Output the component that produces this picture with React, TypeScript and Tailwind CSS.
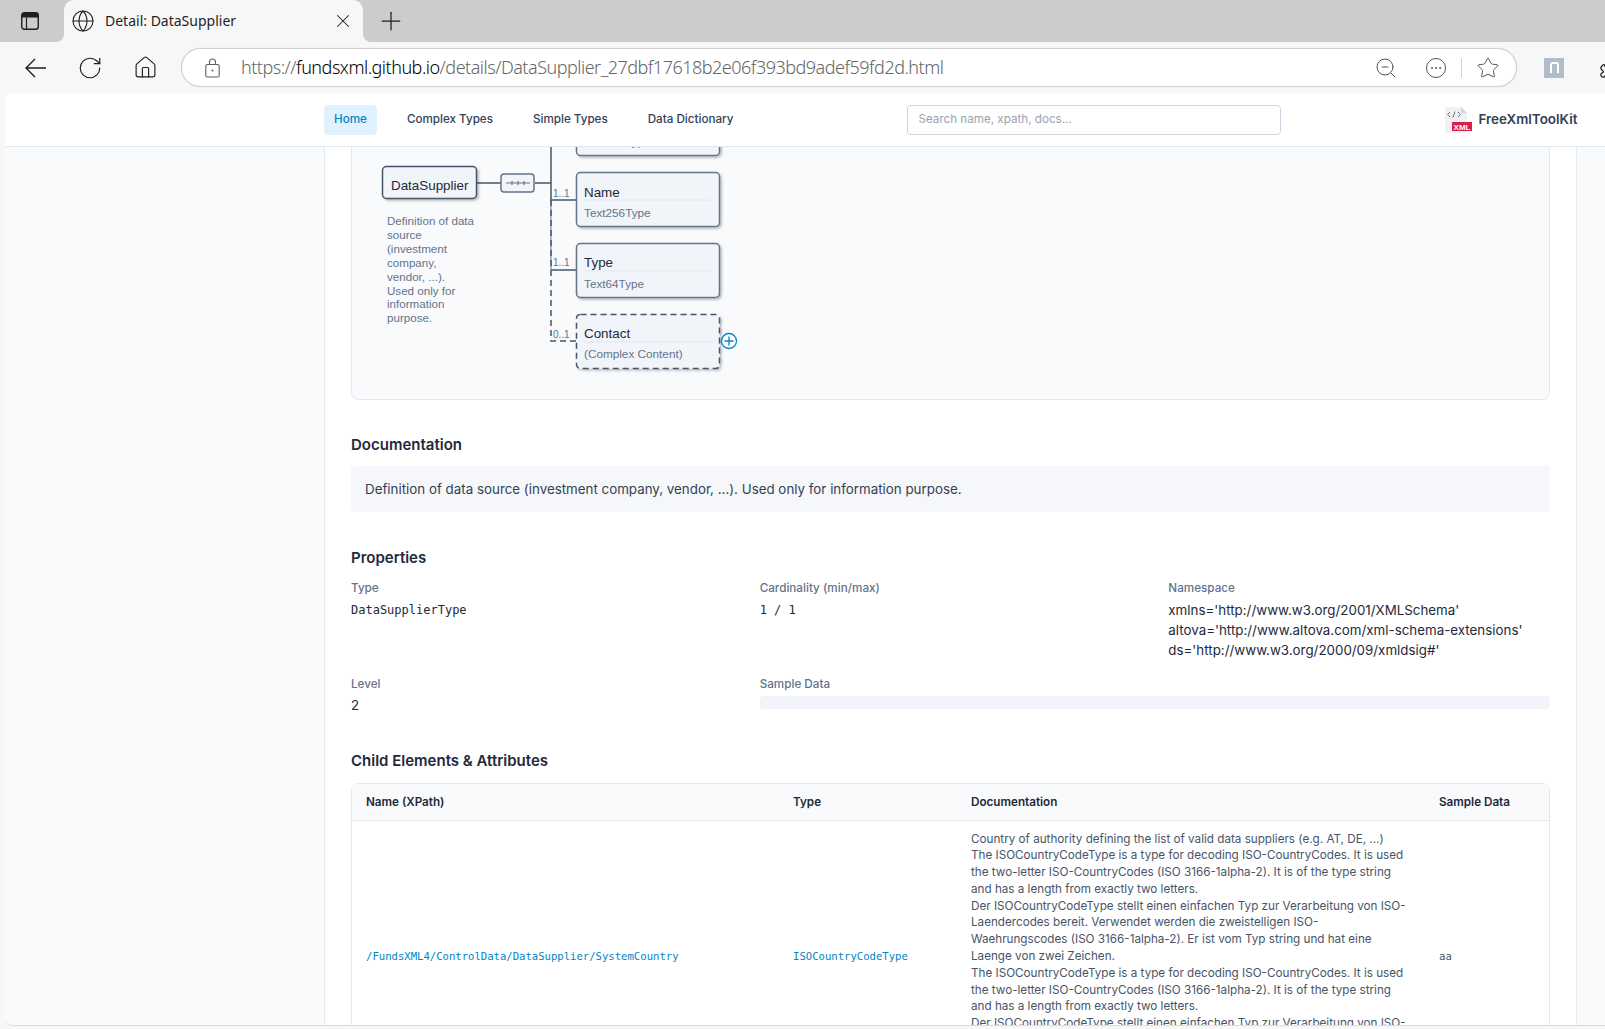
import { Globe, House, Plus, RotateCw, Star, X, ZoomOut, Puzzle, Ellipsis } from 'lucide-react';

const navItems = ['Complex Types', 'Simple Types', 'Data Dictionary'];

const namespaces = [
    "xmlns='http://www.w3.org/2001/XMLSchema'",
    "altova='http://www.altova.com/xml-schema-extensions'",
    "ds='http://www.w3.org/2000/09/xmldsig#'",
];

const docEn = (
    <>
        The ISOCountryCodeType is a type for decoding ISO-CountryCodes. It is used the two-letter
        ISO-CountryCodes (ISO 3166-1alpha-2). It is of the type string and has a length from exactly
        two letters.
    </>
);

const docDe = (
    <>
        Der ISOCountryCodeType stellt einen einfachen Typ zur Verarbeitung von ISO-Laendercodes
        bereit. Verwendet werden die zweistelligen ISO-Waehrungscodes (ISO 3166-1alpha-2). Er ist vom
        Typ string und hat eine Laenge von zwei Zeichen.
    </>
);

// y is the top of the box on the page, the first one sits mostly under the nav bar
const diagramBoxes = [
    { y: 101, name: '', nameY: 0, sub: 'Text256Type', subY: 146, dashed: false },
    { y: 172, name: 'Name', nameY: 197, sub: 'Text256Type', subY: 217, dashed: false },
    { y: 243, name: 'Type', nameY: 267, sub: 'Text64Type', subY: 288, dashed: false },
    { y: 314, name: 'Contact', nameY: 338, sub: '(Complex Content)', subY: 358, dashed: true },
];

const descLines = [
    'Definition of data',
    'source',
    '(investment',
    'company,',
    'vendor, ...).',
    'Used only for',
    'information',
    'purpose.',
];

function TabStrip() {
    return (
        <div className="flex h-[42px] shrink-0 bg-[#f7f7f7]">
            <div className="flex w-[64px] items-center rounded-br-[8px] bg-[#cccccc] pl-[21px]">
                <svg width="18" height="18" viewBox="0 0 18 18" fill="none">
                    <rect x="0.75" y="0.75" width="16.5" height="16.5" rx="2.5" stroke="#1f1f1f" strokeWidth="1.4" />
                    <path d="M1 3a2 2 0 0 1 2-2h12a2 2 0 0 1 2 2v2.5H1z" fill="#1f1f1f" />
                    <path d="M5.5 5.5v11.5" stroke="#1f1f1f" strokeWidth="1.2" />
                </svg>
            </div>
            <div className="w-[299px] bg-[#cccccc]">
                <div className="flex h-full items-center rounded-t-[10px] bg-[#f7f7f7] pl-[7px] text-[#1f1f1f]">
                    <Globe size={24} strokeWidth={1.1} className="shrink-0" />
                    <span className="ml-[10px] w-[227px] pb-[2px] font-['Noto_Sans'] text-[14px]">Detail: DataSupplier</span>
                    <X size={22} strokeWidth={1.1} className="shrink-0" />
                </div>
            </div>
            <div className="flex flex-1 items-center rounded-bl-[8px] bg-[#cccccc] pl-[13px] text-[#1f1f1f]">
                <Plus size={30} strokeWidth={1} />
            </div>
        </div>
    );
}

function Toolbar() {
    return (
        <div className="flex h-[51px] shrink-0 items-center overflow-hidden bg-[#f7f7f7] pl-[25px] text-[#1f1f1f]">
            <svg width="21" height="20" viewBox="0 0 21 20" fill="none" stroke="#1f1f1f" strokeWidth="1.4" className="shrink-0">
                <path d="M21 10H1M10 1l-9 9 9 9" />
            </svg>
            <RotateCw size={26} strokeWidth={1.1} className="ml-[31px] shrink-0" />
            <House size={25} strokeWidth={1.1} className="ml-[30px] shrink-0" />
            <div className="ml-[23px] flex h-[39px] w-[1336px] shrink-0 items-center rounded-full border border-[#d0d0d0] bg-white pl-[23px] shadow-[0_0_1px_#c8c8c8]">
                <svg width="15" height="20" viewBox="0 0 15 20" fill="none" stroke="#5f5f5f" strokeWidth="1.1" className="shrink-0">
                    <rect x="0.8" y="6.5" width="13.4" height="12.5" rx="1.5" />
                    <path d="M4.5 6.5V4a3 3 0 0 1 6 0v2.5" />
                    <circle cx="7.5" cy="12.5" r="1" fill="#5f5f5f" stroke="none" />
                </svg>
                <div className="ml-[21px] w-[1133px] shrink-0 truncate font-['Noto_Sans'] text-[18px] font-light tracking-[-0.5px] text-[#666666]">
                    https://<span className="text-black">fundsxml.github.io</span>/details/DataSupplier_27dbf17618b2e06f393bd9adef59fd2d.html
                </div>
                <ZoomOut size={24} strokeWidth={1} className="shrink-0 text-[#555555]" />
                <div className="ml-[28px] flex h-[20px] w-[20px] shrink-0 items-center justify-center rounded-full border border-[#555555] text-[#555555]">
                    <Ellipsis size={14} strokeWidth={1.6} />
                </div>
                <div className="ml-[15px] h-[20px] w-px shrink-0 bg-[#d4d4d4]" />
                <Star size={24} strokeWidth={1} className="ml-[14px] shrink-0 text-[#555555]" />
            </div>
            <div className="ml-[27px] flex h-[20px] w-[20px] shrink-0 items-center justify-center bg-[#b2bccb]">
                <div className="h-[11px] w-[9px] rounded-t-[3px] border-x-2 border-t-2 border-white" />
            </div>
            <Puzzle size={22} strokeWidth={1.4} className="ml-[35px] shrink-0" />
        </div>
    );
}

function NavBar() {
    return (
        <div className="flex h-[54px] shrink-0 items-center border-b border-[#e2e8f0] bg-white pl-[319px] font-['Inter'] text-[11.65px] font-medium text-[#334155]">
            <div className="flex h-[30px] items-center rounded-[4px] bg-[#e0f2fe] px-[10px] text-[#0284c7]">Home</div>
            {navItems.map((item) => (
                <div key={item} className="ml-[20px] px-[10px]">
                    {item}
                </div>
            ))}
            <div className="ml-[164px] flex h-[30px] w-[374px] items-center rounded-[4px] border border-[#cbd5e1] px-[10px] font-normal text-[#9ca3af]">
                Search name, xpath, docs...
            </div>
            <svg width="27" height="26" viewBox="0 0 27 26" className="ml-[164px] shrink-0">
                <path d="M0 0h16l6 6v20H0z" fill="#f1f1f1" />
                <path d="M16 0l6 6h-6z" fill="#d4d4d4" />
                <path d="M5 5L2.5 7.5 5 10M10 4.5l-2 6M13 5l2.5 2.5L13 10" stroke="#64748b" strokeWidth="1" fill="none" />
                <rect x="7" y="15" width="20" height="9" fill="#d81e4a" />
                <text x="17" y="22.5" textAnchor="middle" fontFamily="Liberation Sans" fontSize="8" fontWeight="700" fill="#ffffff">XML</text>
            </svg>
            <span className="ml-[6px] text-[13.45px] font-semibold text-[#334155]">FreeXmlToolKit</span>
        </div>
    );
}

function SchemaDiagram() {
    // viewBox follows the page coordinates, so what is above y=147 is behind the nav bar
    return (
        <svg width="500" height="252" viewBox="352 147 500 252" fontFamily="Liberation Sans" className="block">
            <defs>
                <filter id="boxShadow" x="-10%" y="-10%" width="125%" height="125%">
                    <feDropShadow dx="1.5" dy="1.5" stdDeviation="1.2" floodColor="#000000" floodOpacity="0.28" />
                </filter>
            </defs>

            <path d="M551 200V270" stroke="#94a3b8" strokeWidth="1.5" />
            <path d="M551 146V200M551 200H576M551 270H576M477 183H501M535 183H551" stroke="#475569" strokeWidth="1.5" fill="none" />
            <path d="M551 200V341H576" stroke="#475569" strokeWidth="1.5" strokeDasharray="6 4" fill="none" />

            <rect x="382.5" y="166.5" width="94" height="32" rx="4" fill="#f1f5f9" stroke="#475569" strokeWidth="1.5" filter="url(#boxShadow)" />
            <text x="391" y="190" fontSize="13.4" fill="#1e293b">DataSupplier</text>
            {descLines.map((line, i) => (
                <text key={line} x="387" y={225 + i * 13.9} fontSize="11.6" fill="#64748b">{line}</text>
            ))}

            <rect x="501" y="174" width="33" height="18" rx="3" fill="#f1f5f9" stroke="#64748b" strokeWidth="1.5" />
            <path d="M506 183H530" stroke="#64748b" strokeWidth="1" />
            <path d="M512 181v4M518 181v4M524 181v4" stroke="#64748b" strokeWidth="1.2" />

            {diagramBoxes.map((box) => (
                <g key={box.y}>
                    <rect
                        x="576.5"
                        y={box.y + 0.5}
                        width="143"
                        height="54"
                        rx="4"
                        fill="#f1f5f9"
                        stroke={box.dashed ? '#475569' : '#64748b'}
                        strokeWidth="1.5"
                        strokeDasharray={box.dashed ? '6 4' : undefined}
                        filter="url(#boxShadow)"
                    />
                    {box.name && <text x="584" y={box.nameY} fontSize="13.4" fill="#1e293b">{box.name}</text>}
                    <path d={`M584 ${box.y + 28}H711`} stroke="#e2e8f0" strokeWidth="1" />
                    <text x="584" y={box.subY} fontSize="11.75" fill="#64748b">{box.sub}</text>
                </g>
            ))}

            <text x="553" y="197" fontSize="10" fill="#64748b">1..1</text>
            <text x="553" y="266" fontSize="10" fill="#64748b">1..1</text>
            <text x="553" y="338" fontSize="10" fill="#64748b">0..1</text>

            <circle cx="729" cy="341" r="7.5" fill="#ffffff" stroke="#0284c7" strokeWidth="1.3" />
            <path d="M724.5 341H733.5M729 336.5V345.5" stroke="#0284c7" strokeWidth="1.3" />
        </svg>
    );
}

function PropLabel({ children }: { children: string }) {
    return <div className="text-[11.7px] leading-[16px] font-medium text-[#64748b]">{children}</div>;
}

function MainContent() {
    return (
        <div className="w-[1253px] shrink-0 border-x border-[#e2e8f0] bg-white px-[26px] font-['Inter'] text-[#1e293b]">
            <div className="h-[253px] rounded-b-lg border border-t-0 border-[#e2e8f0] bg-[#f8fafc]">
                <SchemaDiagram />
            </div>

            <h2 className="mt-[33px] text-[15px] leading-[24px] font-semibold">Documentation</h2>
            <div className="mt-[9px] flex h-[46px] items-center rounded-[4px] bg-[#f5f7fa] px-[14px] text-[13.35px] text-[#334155]">
                Definition of data source (investment company, vendor, ...). Used only for information purpose.
            </div>

            <h2 className="mt-[34px] text-[15px] leading-[24px] font-semibold">Properties</h2>
            <div className="mt-[10px] grid grid-cols-3 gap-x-[27px] gap-y-4">
                <div>
                    <PropLabel>Type</PropLabel>
                    <div className="mt-[4px] font-['DejaVu_Sans_Mono'] text-[12px] leading-[20px]">DataSupplierType</div>
                </div>
                <div>
                    <PropLabel>Cardinality (min/max)</PropLabel>
                    <div className="mt-[4px] font-['DejaVu_Sans_Mono'] text-[12px] leading-[20px]">1 / 1</div>
                </div>
                <div>
                    <PropLabel>Namespace</PropLabel>
                    <div className="mt-[4px] text-[13.35px] leading-[20px]">
                        {namespaces.map((ns) => (
                            <div key={ns}>{ns}</div>
                        ))}
                    </div>
                </div>
                <div>
                    <PropLabel>Level</PropLabel>
                    <div className="mt-[3px] text-[13.35px] leading-[20px]">2</div>
                </div>
                <div className="col-span-2">
                    <PropLabel>Sample Data</PropLabel>
                    <div className="mt-[4px] h-[13px] rounded-[4px] bg-[#f1f5f9]" />
                </div>
            </div>

            <h2 className="mt-[34px] text-[15px] leading-[24px] font-semibold">Child Elements &amp; Attributes</h2>
            <div className="mt-[10px] rounded-t-lg border border-[#e2e8f0]">
                <table className="w-full table-fixed border-collapse text-[11.68px]">
                    <thead>
                        <tr className="h-[36px] border-b border-[#e2e8f0] bg-[#f8fafc] text-left">
                            <th className="w-[427px] px-[14px] pt-[2px] font-semibold">Name (XPath)</th>
                            <th className="w-[178px] px-[14px] pt-[2px] font-semibold">Type</th>
                            <th className="w-[468px] px-[14px] pt-[2px] font-semibold">Documentation</th>
                            <th className="px-[14px] pt-[2px] font-semibold">Sample Data</th>
                        </tr>
                    </thead>
                    <tbody>
                        <tr>
                            <td className="px-[14px] font-['DejaVu_Sans_Mono'] text-[10.6px] text-[#0284c7]">
                                /FundsXML4/ControlData/DataSupplier/SystemCountry
                            </td>
                            <td className="px-[14px] font-['DejaVu_Sans_Mono'] text-[10.6px] text-[#0284c7]">ISOCountryCodeType</td>
                            <td className="px-[14px] py-[10px] leading-[16.8px] text-[#475569]">
                                Country of authority defining the list of valid data suppliers (e.g. AT, DE, ...)
                                <br />
                                {docEn}
                                <br />
                                {docDe}
                                <br />
                                {docEn}
                                <br />
                                {docDe}
                            </td>
                            <td className="px-[14px] font-['DejaVu_Sans_Mono'] text-[10.6px] text-[#475569]">aa</td>
                        </tr>
                    </tbody>
                </table>
            </div>
        </div>
    );
}

export default function App() {
    return (
        <div className="flex h-[1029px] w-[1605px] flex-col overflow-hidden bg-[#f7f7f7]">
            <TabStrip />
            <Toolbar />
            <div className="mb-[3px] ml-[5px] flex min-h-0 flex-1 flex-col overflow-hidden rounded-tl-lg rounded-bl-lg border-b border-[#d8dde3] bg-white">
                <NavBar />
                <div className="flex min-h-0 flex-1">
                    <div className="w-[319px] shrink-0 bg-[#f8fafc]" />
                    <MainContent />
                    <div className="flex-1 bg-[#f8fafc]" />
                </div>
            </div>
        </div>
    );
}
